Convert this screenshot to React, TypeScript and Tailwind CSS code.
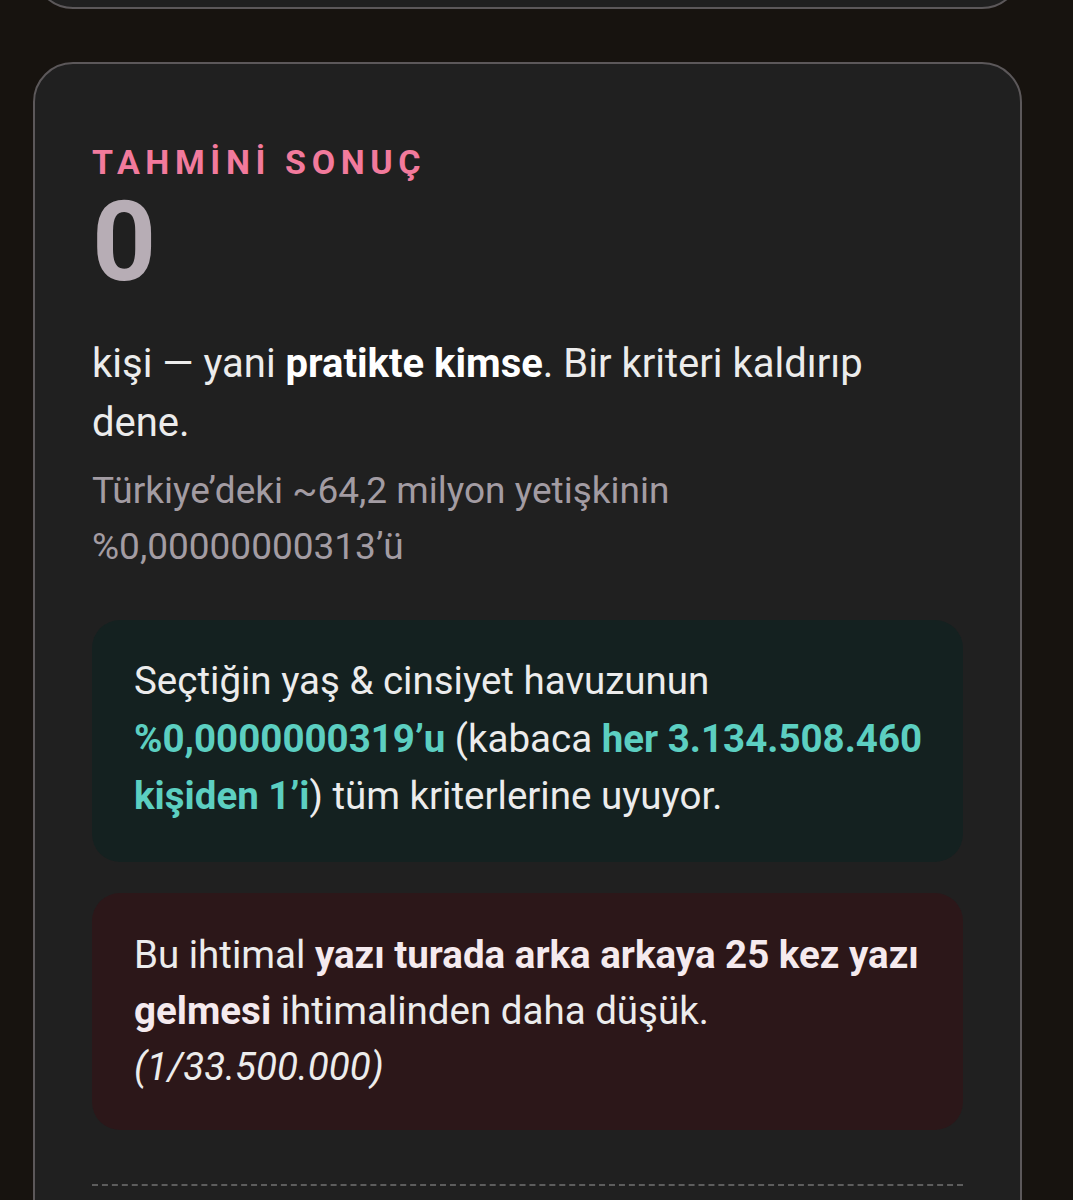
import * as React from 'react';

const App: React.FC = () => {
  return (
    <div className="min-h-screen bg-[#17130f] pl-[33px] pr-[51px] overflow-hidden" style={{ fontFamily: 'Roboto, "Noto Sans", sans-serif' }}>
      {/* previous card, only its bottom edge shows */}
      <div className="-mt-[100px] h-[109px] rounded-[40px] border-2 border-[#5c585a] bg-[#202020]" />

      <div className="mt-[53px] rounded-[40px] border-2 border-[#5c585a] bg-[#202020] pl-[57px] pr-[57px] pt-[80px] pb-[40px]">
        <div className="text-[34px] font-bold tracking-[0.165em] leading-[36px] text-[#f27a9c]">TAHMİNİ SONUÇ</div>
        <div className="mt-[6px] text-[112px] font-bold leading-[112px] text-[#b7adb5]">0</div>

        <p className="mt-[36px] text-[40px] leading-[59px] text-[#ececec]">
          kişi — yani <b className="font-bold text-white">pratikte kimse</b>. Bir kriteri kaldırıp dene.
        </p>
        <p className="mt-[11px] text-[37px] leading-[56px] text-[#a39ca3]">
          Türkiye’deki ~64,2 milyon yetişkinin %0,00000000313’ü
        </p>

        <div className="mt-[45px] rounded-[28px] bg-[#142120] pl-[42px] pr-[28px] pt-[32px] pb-[37px]">
          <p className="text-[38.5px] leading-[57.5px] text-[#ececec]">
            Seçtiğin yaş &amp; cinsiyet havuzunun{' '}
            <b className="font-bold text-[#5ccfc1]">%0,0000000319’u</b> (kabaca{' '}
            <b className="font-bold text-[#5ccfc1]">her 3.134.508.460 kişiden 1’i</b>) tüm kriterlerine uyuyor.
          </p>
        </div>

        <div className="mt-[31px] rounded-[28px] bg-[#2c1719] pl-[42px] pr-[28px] pt-[34px] pb-[35px]">
          <p className="text-[38.5px] leading-[56px] text-[#ececec]">
            Bu ihtimal <b className="font-bold text-[#f5eaee]">yazı turada arka arkaya 25 kez yazı gelmesi</b> ihtimalinden daha düşük.{' '}
            <i>(1/33.500.000)</i>
          </p>
        </div>

        <div className="mt-[54px] border-t-[2px] border-dashed border-[#5d5d5d]" />
        <div className="h-[200px]" />
      </div>
    </div>
  );
};

export default App;
